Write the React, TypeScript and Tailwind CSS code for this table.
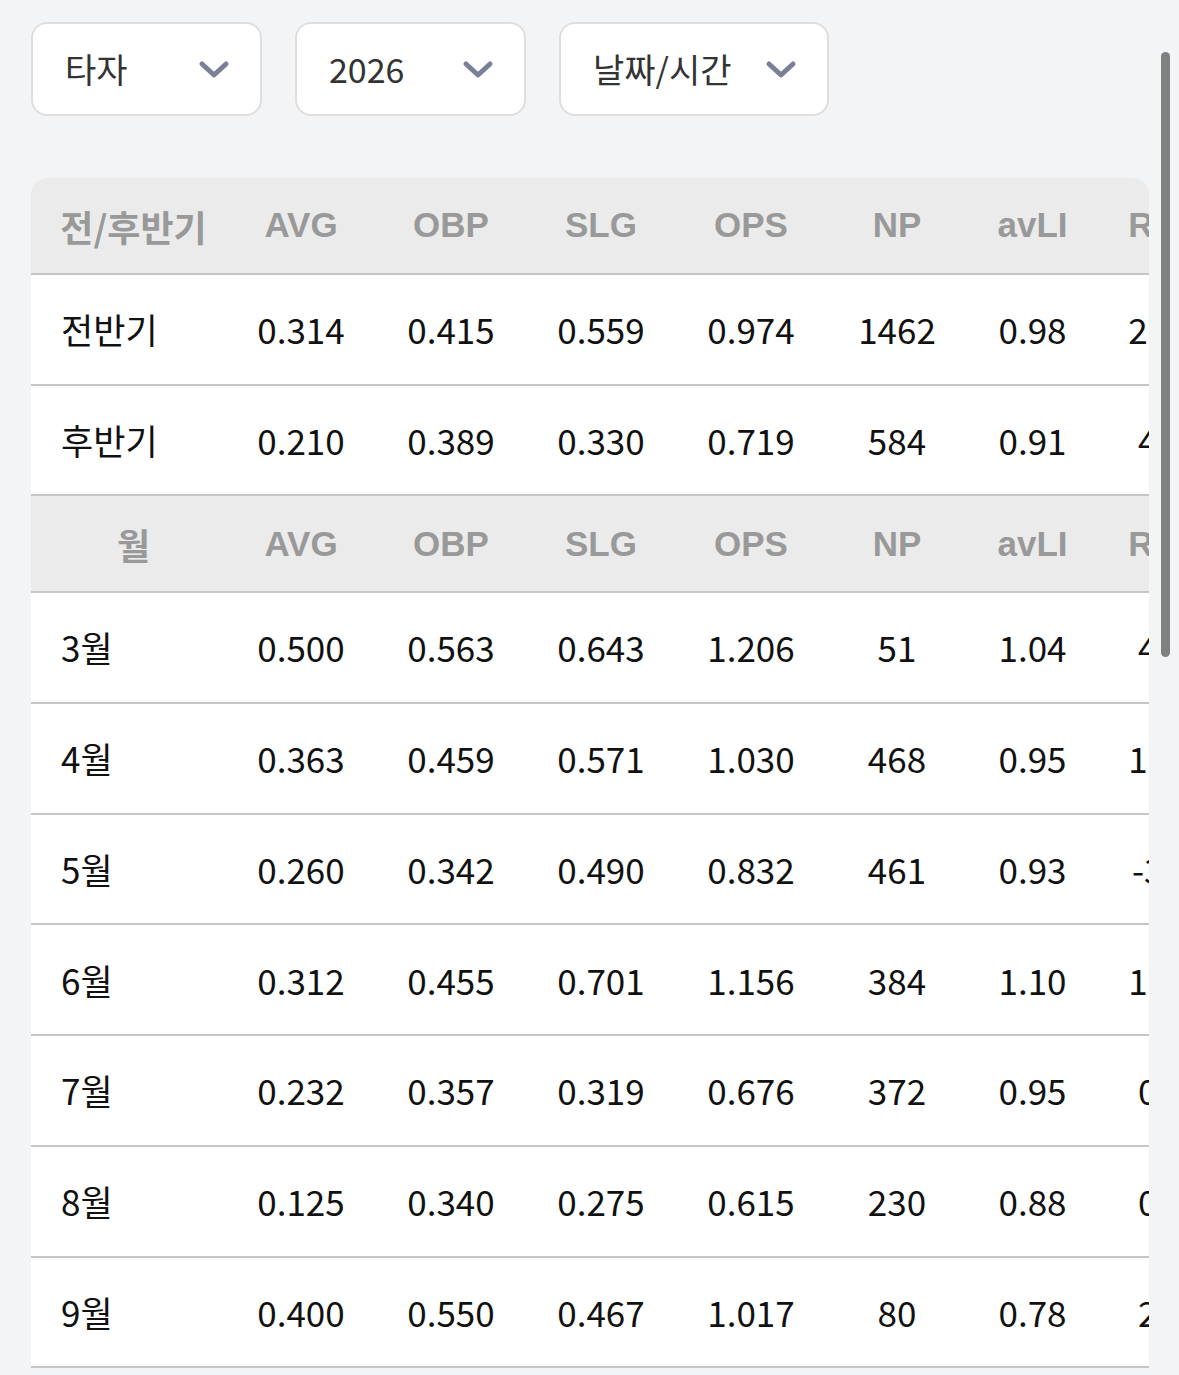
import React from 'react';

const cols = [
  { key: 'label', w: 'w-[195px]' },
  { key: 'AVG', w: 'w-[150px]' },
  { key: 'OBP', w: 'w-[150px]' },
  { key: 'SLG', w: 'w-[150px]' },
  { key: 'OPS', w: 'w-[150px]' },
  { key: 'NP', w: 'w-[142px]' },
  { key: 'avLI', w: 'w-[129px]' },
  { key: 'RE24', w: 'w-[150px]' },
];

const halves = [
  ['전반기', '0.314', '0.415', '0.559', '0.974', '1462', '0.98', '21.84'],
  ['후반기', '0.210', '0.389', '0.330', '0.719', '584', '0.91', '4.12'],
];

const months = [
  ['3월', '0.500', '0.563', '0.643', '1.206', '51', '1.04', '4.05'],
  ['4월', '0.363', '0.459', '0.571', '1.030', '468', '0.95', '10.41'],
  ['5월', '0.260', '0.342', '0.490', '0.832', '461', '0.93', '-3.27'],
  ['6월', '0.312', '0.455', '0.701', '1.156', '384', '1.10', '11.13'],
  ['7월', '0.232', '0.357', '0.319', '0.676', '372', '0.95', '0.42'],
  ['8월', '0.125', '0.340', '0.275', '0.615', '230', '0.88', '0.17'],
  ['9월', '0.400', '0.550', '0.467', '1.017', '80', '0.78', '2.31'],
];

function Chevron() {
  return (
    <svg width="32" height="20" viewBox="0 0 32 20" fill="none" className="shrink-0">
      <path d="M4 5 L16 16 L28 5" stroke="#7b8099" strokeWidth="5" strokeLinecap="round" strokeLinejoin="round" />
    </svg>
  );
}

function Select({ label, fixed }: { label: string; fixed?: boolean }) {
  return (
    <div
      className={`flex h-[94px] items-center justify-between rounded-[16px] border-2 border-[#dedede] bg-white pl-[32px] pr-[30px] ${
        fixed ? 'w-[231px]' : 'gap-[34px]'
      }`}
    >
      <span className="text-[34px] text-[#333] leading-none">{label}</span>
      <Chevron />
    </div>
  );
}

function HeaderRow({ first }: { first: string }) {
  return (
    <div className="flex h-[97px] items-center border-b-2 border-[#c6c6c6] bg-[#ebebeb] font-['Liberation_Sans','Noto_Sans_CJK_KR',sans-serif] text-[35px] font-bold text-[#999]">
      {cols.map((c, i) => (
        <div
          key={c.key}
          className={`${c.w} shrink-0 text-center ${i === 0 ? "pl-[26px] pr-[16px] font-['Noto_Sans_CJK_KR',sans-serif] text-[36px]" : ''}`}
        >
          {i === 0 ? first : c.key}
        </div>
      ))}
    </div>
  );
}

function DataRow({ row }: { row: string[] }) {
  return (
    <div className="flex h-[110.7px] items-center border-b-2 border-[#c6c6c6] bg-white text-[35px] text-[#111]">
      {row.map((v, i) => (
        <div key={i} className={`${cols[i].w} shrink-0 ${i === 0 ? 'pl-[30px] text-left' : 'text-center'}`}>
          {v}
        </div>
      ))}
    </div>
  );
}

export default function App() {
  return (
    <div className="relative min-h-screen bg-[#f3f4f6] pt-[22px] font-['Noto_Sans_CJK_KR',sans-serif]">
      <div className="flex gap-[33px] pl-[31px]">
        <Select label="타자" fixed />
        <Select label="2026" fixed />
        <Select label="날짜/시간" />
      </div>

      <div className="ml-[31px] mt-[62px] w-[1118px] overflow-hidden rounded-t-[16px]">
        <div className="w-max">
          <HeaderRow first="전/후반기" />
          {halves.map((r) => (
            <DataRow key={r[0]} row={r} />
          ))}
          <HeaderRow first="월" />
          {months.map((r) => (
            <DataRow key={r[0]} row={r} />
          ))}
        </div>
      </div>

      <div className="absolute left-[1161px] top-[52px] h-[605px] w-[9px] rounded-full bg-[#808080]" />
    </div>
  );
}
